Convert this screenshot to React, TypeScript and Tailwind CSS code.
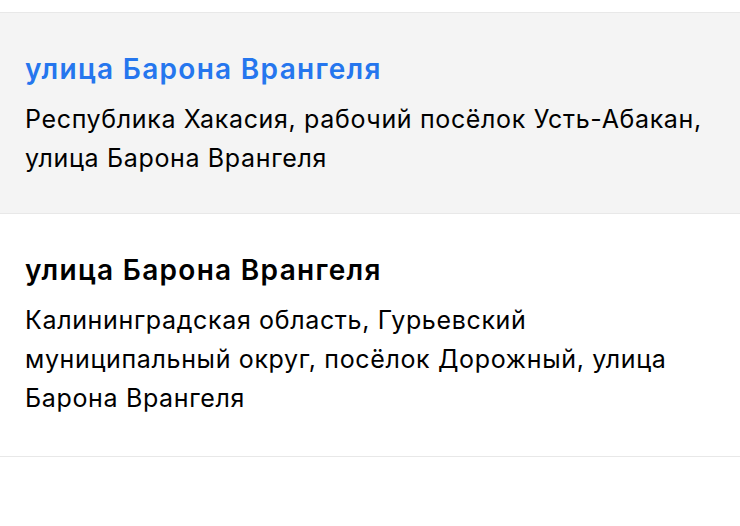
import React from "react";

const items = [
  {
    title: "улица Барона Врангеля",
    sub: ["Республика Хакасия, рабочий посёлок Усть-Абакан,", "улица Барона Врангеля"],
    active: true,
  },
  {
    title: "улица Барона Врангеля",
    sub: ["Калининградская область, Гурьевский", "муниципальный округ, посёлок Дорожный, улица", "Барона Врангеля"],
    active: false,
  },
];

export default function App() {
  return (
    <div
      className="w-[740px] h-[526px] bg-white overflow-hidden pt-[12px]"
      style={{ fontFamily: 'Inter, "Noto Sans", sans-serif' }}
    >
      <div className="border-t border-[#e8e8e8]">
        {items.map((it, i) => (
          <div
            key={i}
            className={`border-b border-[#e8e8e8] pl-[25px] pr-4 pt-[38px] ${i === 0 ? "pb-[35px]" : "pb-[38px]"} ${it.active ? "bg-[#f4f4f4]" : "bg-white"}`}
          >
            <div
              className={`text-[28px] leading-[36px] font-semibold tracking-[1.3px] ${it.active ? "text-[#2576ee]" : "text-black"}`}
            >
              {it.title}
            </div>
            <div className="mt-[13px] text-[25px] leading-[39px] tracking-[0.65px] text-black">
              {it.sub.map((l, j) => (
                <div key={j}>{l}</div>
              ))}
            </div>
          </div>
        ))}
      </div>
    </div>
  );
}
